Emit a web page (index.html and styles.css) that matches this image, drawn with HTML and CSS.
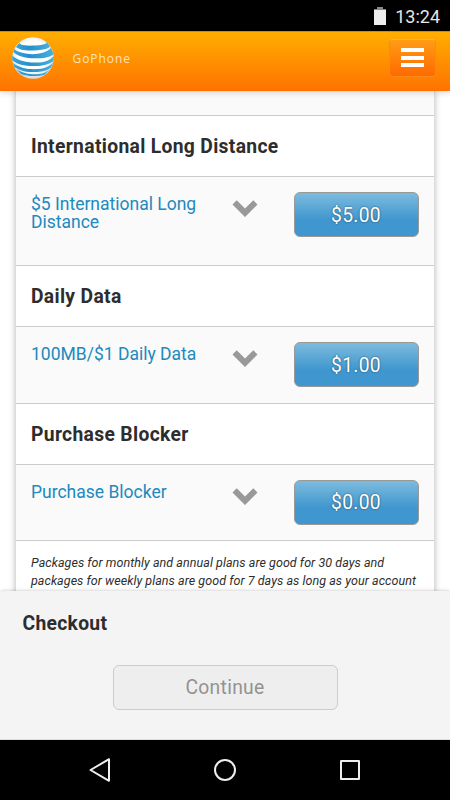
FILE: index.html
```html
<!DOCTYPE html>
<html lang="en">
<head>
<meta charset="utf-8">
<title>GoPhone</title>
<link rel="stylesheet" href="styles.css">
</head>
<body>
<div class="statusbar">
  <svg class="battery" width="12" height="18" viewBox="0 0 12 18"><path fill="#888" d="M3 0h6v2h3v3H0V2h3z"/><path fill="#eee" d="M0 3h12v15H0z"/></svg>
  <span class="clock">13:24</span>
</div>
<header class="header">
  <svg class="logo" width="42" height="42" viewBox="0 0 42 42">
    <defs>
      <clipPath id="globe"><circle cx="21" cy="21" r="20.8"/></clipPath>
      <radialGradient id="white" cx=".5" cy=".45" r=".55"><stop offset=".65" stop-color="#fff"/><stop offset="1" stop-color="#d2d7da"/></radialGradient>
      <linearGradient id="blue"><stop offset="0" stop-color="#3ba5d8"/><stop offset=".4" stop-color="#2490cc"/><stop offset="1" stop-color="#48b0dd"/></linearGradient>
    </defs>
    <g clip-path="url(#globe)">
      <path fill="url(#white)" d="M0 0h42v42H0z"/>
      <g fill="url(#blue)">
        <path d="M9 4C4 7.500 12 9 21 8.600S37 7 34 4L38 9C37 12 31 13 22 13.400C13 14 8 13 4 10z"/>
        <path d="M2 12C10 18.500 31 19.500 39 11L42 17C36 21.500 29 21.500 20 21.300C10 20.500 4 18 1 14.500z"/>
        <path d="M0 18.500C8 25 18 26 27 25.400C35 25 39 22 42 19V23.500C37 28 29 29.300 22 29C12 29 5 27.500 0 23z"/>
        <path d="M1 26C9 32 18 32.500 26 32C34 31.500 38 29 42 25L39 30.500C34 34.500 27 35.300 21 35C12 35 6 33 2 29.500z"/>
        <path d="M4 32C12 37 19 37.600 25 37.200C31 37 34 35.500 38 32L33 37.500C26 39.600 17 39.800 9 37z"/>
      </g>
    </g>
  </svg>
  <span class="brand">GoPhone</span>
  <button class="menu" aria-label="Menu"><i></i><i></i><i></i></button>
</header>
<main class="page">
  <div class="card">
    <div class="stub"></div>
    <h2>International Long Distance</h2>
    <div class="row tall">
      <a>$5 International Long Distance</a>
      <svg class="chev" width="26" height="18" viewBox="0 0 26 18"><path fill="#999" d="M4.700.200L13 8.400 21.300.200 25.500 4.400 13 17 .500 4.400z"/></svg>
      <button class="price">$5.00</button>
    </div>
    <h2>Daily Data</h2>
    <div class="row">
      <a>100MB/$1 Daily Data</a>
      <svg class="chev" width="26" height="18" viewBox="0 0 26 18"><path fill="#999" d="M4.700.200L13 8.400 21.300.200 25.500 4.400 13 17 .500 4.400z"/></svg>
      <button class="price">$1.00</button>
    </div>
    <h2>Purchase Blocker</h2>
    <div class="row">
      <a>Purchase Blocker</a>
      <svg class="chev" width="26" height="18" viewBox="0 0 26 18"><path fill="#999" d="M4.700.200L13 8.400 21.300.200 25.500 4.400 13 17 .500 4.400z"/></svg>
      <button class="price">$0.00</button>
    </div>
    <p class="note">Packages for monthly and annual plans are good for 30 days and<br>packages for weekly plans are good for 7 days as long as your account</p>
  </div>
</main>
<section class="checkout">
  <h3>Checkout</h3>
  <button class="continue">Continue</button>
</section>
<nav class="navbar">
  <svg width="450" height="60" viewBox="0 0 450 60" fill="none" stroke="#eee" stroke-width="2" stroke-linejoin="round"><path d="M109 19.200v21.600L90.500 30z"/><circle cx="225" cy="30" r="10"/><path d="M341 21h18v18h-18z"/></svg>
</nav>
</body>
</html>
```

FILE: styles.css
```css
* { box-sizing: border-box; }
body {
  margin: 0;
  width: 450px;
  height: 800px;
  display: flex;
  flex-direction: column;
  overflow: hidden;
  background: #fff;
  font-family: Roboto, "Liberation Sans", sans-serif;
  color: #2d2d2d;
}
button { font-family: inherit; padding: 0; margin: 0; }
.statusbar {
  flex: none;
  height: 31px;
  background: #000;
  display: flex;
  justify-content: flex-end;
  padding: 7px 10px 0 0;
}
.battery { margin-right: 9px; }
.clock { color: #e6e6e6; font-size: 18px; line-height: 19px; font-weight: 400; }
.header {
  flex: none;
  position: relative;
  z-index: 2;
  height: 60px;
  display: flex;
  align-items: center;
  padding: 0 14px 0 12px;
  background: linear-gradient(#ffae00, #ff7200);
  border-top: 1px solid #d28a08;
  box-shadow: 0 1px 7px rgba(0, 0, 0, .2);
}
.logo { margin-top: -7px; }
.brand {
  margin: -6px auto 0 18.500px;
  color: #ffe2b8;
  font: 12px/16px "Open Sans", sans-serif;
  letter-spacing: .95px;
}
.menu {
  width: 47px;
  height: 38px;
  margin-top: -8px;
  display: flex;
  flex-direction: column;
  align-items: center;
  justify-content: center;
  gap: 3.500px;
  background: linear-gradient(#ff9c16, #ff6a00);
  border: 1px solid #f98a1c;
  border-top-color: #ffb347;
  border-radius: 4px;
}
.menu i { width: 23px; height: 4px; background: #fff; }
.page { flex: none; height: 500px; padding: 0 15px; overflow: hidden; }
.card {
  height: 540px;
  border: solid #dcdcdc;
  border-width: 0 1px;
  box-shadow: 0 0 6px rgba(0, 0, 0, .25);
  background: #fff;
}
.stub { height: 25px; background: #fafafa; border-bottom: 1px solid #ccc; }
h2 {
  margin: 0;
  height: 61.250px;
  padding-left: 15px;
  font-size: 19.300px;
  letter-spacing: .33px;
  line-height: 61px;
  border-bottom: 1px solid #ccc;
}
.row {
  height: 76.250px;
  padding: 15px 15px 0;
  display: flex;
  align-items: flex-start;
  background: #fafafa;
  border-bottom: 1px solid #ccc;
}
.row.tall { height: 88.750px; }
.row a {
  width: 185px;
  margin-top: 4px;
  color: #2189be;
  font-size: 17.500px;
  line-height: 17.500px;
}
.chev { margin: 8px 35.500px 0 16px; flex: none; }
.price {
  width: 125px;
  height: 45px;
  padding-top: 1px;
  border: 1px solid #999;
  border-radius: 6px;
  background: linear-gradient(#7dbbdd, #4097cf 62%);
  color: #fff;
  font-size: 19.300px;
  letter-spacing: .3px;
  text-shadow: 0 0 2px rgba(0, 0, 0, .6);
}
.note {
  margin: 0;
  padding: 13px 0 0 15px;
  font-size: 12.500px;
  letter-spacing: .055px;
  line-height: 17.500px;
  font-style: italic;
  white-space: nowrap;
}
.checkout {
  flex: none;
  position: relative;
  height: 149px;
  background: #f4f4f4;
  border-radius: 4px 4px 0 0;
  border-bottom: 1px solid #ddd;
  box-shadow: 0 -1px 3px rgba(0, 0, 0, .15);
}
h3 { margin: 0; padding: 20px 0 0 22.500px; font-size: 19.300px; letter-spacing: .3px; line-height: 25px; }
.continue {
  display: block;
  width: 225px;
  height: 45px;
  margin: 29px auto 0;
  border: 1px solid #ccc;
  border-radius: 6px;
  background: #eee;
  color: #929292;
  font-size: 19.300px;
  letter-spacing: .3px;
}
.navbar { flex: none; height: 60px; background: #000; }
```
